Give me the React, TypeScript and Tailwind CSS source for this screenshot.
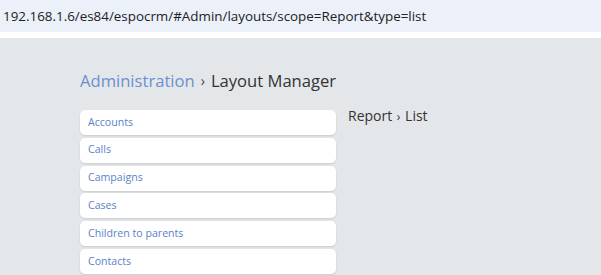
import React from "react";

const items = ["Accounts", "Calls", "Campaigns", "Cases", "Children to parents", "Contacts"];

export default function App() {
  return (
    <div className="w-[601px] h-[275px] overflow-hidden bg-[#e4e7ea]" style={{ fontFamily: '"Open Sans", sans-serif' }}>
      <div className="h-[32px] bg-[#ecf1f9] flex items-center pl-[3px] text-[13.4px] text-[#202124]">
        192.168.1.6/es84/espocrm/#Admin/layouts/scope=Report&amp;type=list
      </div>
      <div className="h-[6px] bg-white" />
      <div className="pl-[80px] pt-[31px]">
        <div className="text-[16.6px] leading-[24px] text-[#333] flex items-center">
          <span className="text-[#6b8fd0]">Administration</span>
          <span className="text-[#444] text-[14px] mx-[6px]">›</span>
          <span>Layout Manager</span>
        </div>
        <div className="flex mt-[17px]">
          <div className="w-[256px] flex flex-col gap-[2.8px]">
            {items.map((t) => (
              <div
                key={t}
                className="h-[25px] bg-white rounded-[5px] shadow-[0_1px_2px_rgba(0,0,0,0.12)] flex items-center pl-[8px] text-[10.6px] text-[#5b82c8]"
              >
                {t}
              </div>
            ))}
          </div>
          <div className="ml-[12px] text-[14px] leading-[16px] text-[#333] -mt-[2px]">
            Report <span className="text-[12px] mx-[1px]">›</span> List
          </div>
        </div>
      </div>
    </div>
  );
}
